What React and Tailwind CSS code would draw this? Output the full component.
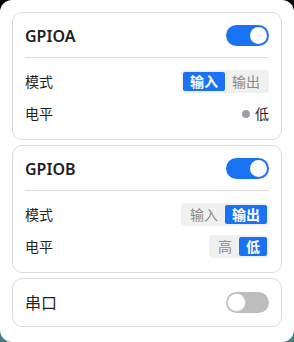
import { useState } from "react";

const font = { fontFamily: '"Noto Sans", "Noto Sans CJK SC", sans-serif' };

function Toggle({ on, onClick }) {
    return (
        <button
            onClick={onClick}
            className={`relative w-[43px] h-[21px] rounded-full ${on ? "bg-[#1a73f5]" : "bg-[#bdbdbd]"}`}
        >
            <span
                className={`absolute top-[2px] w-[17px] h-[17px] rounded-full bg-white ${on ? "right-[2px]" : "left-[2px] shadow-[0_0_0_1px_#cfcfcf]"}`}
            />
        </button>
    );
}

function Segment({ options, value, onChange }) {
    return (
        <div className="flex bg-[#f0f0f0] rounded-[4px] p-[2px]">
            {options.map((o) => (
                <button
                    key={o}
                    onClick={() => onChange(o)}
                    className={`h-[19px] px-[7px] rounded-[2px] text-[14px] leading-[19px] ${
                        value === o ? "bg-[#1a73f5] text-white font-bold" : "text-[#8a8a8a]"
                    }`}
                >
                    {o}
                </button>
            ))}
        </div>
    );
}

function GpioCard({ name, mode, setMode, level, setLevel }) {
    const [on, setOn] = useState(true);
    return (
        <div className="border border-[#dcdcdc] rounded-[10px] px-[12px]">
            <div className="h-[45px] flex items-center justify-between border-b border-[#dcdcdc] pt-[1px]">
                <span className="text-[16px] font-semibold text-[#1f1f1f]">{name}</span>
                <Toggle on={on} onClick={() => setOn(!on)} />
            </div>
            <div className="flex flex-col gap-[9px] pt-[12px] pb-[14px]">
                <div className="h-[23px] flex items-center justify-between">
                    <span className="text-[14px] text-[#1f1f1f]">模式</span>
                    <Segment options={["输入", "输出"]} value={mode} onChange={setMode} />
                </div>
                <div className="h-[23px] flex items-center justify-between">
                    <span className="text-[14px] text-[#1f1f1f]">电平</span>
                    {mode === "输入" ? (
                        <div className="flex items-center gap-[5px]">
                            <span className="w-[8px] h-[8px] rounded-full bg-[#9ca0ab]" />
                            <span className="text-[14px] text-[#1f1f1f]">{level}</span>
                        </div>
                    ) : (
                        <Segment options={["高", "低"]} value={level} onChange={setLevel} />
                    )}
                </div>
            </div>
        </div>
    );
}

export default function App() {
    const [modeA, setModeA] = useState("输入");
    const [levelA, setLevelA] = useState("低");
    const [modeB, setModeB] = useState("输出");
    const [levelB, setLevelB] = useState("低");
    const [uart, setUart] = useState(false);

    return (
        <div className="w-[294px] h-[342px] bg-gradient-to-b from-black to-[#3f7f80]" style={font}>
            <div className="h-full bg-white rounded-[12px] px-[12px] pt-[12px] flex flex-col gap-[5px]">
                <GpioCard name="GPIOA" mode={modeA} setMode={setModeA} level={levelA} setLevel={setLevelA} />
                <GpioCard name="GPIOB" mode={modeB} setMode={setModeB} level={levelB} setLevel={setLevelB} />
                <div className="h-[49px] border border-[#dcdcdc] rounded-[10px] px-[12px] flex items-center justify-between">
                    <span className="text-[16px] text-[#1f1f1f]">串口</span>
                    <Toggle on={uart} onClick={() => setUart(!uart)} />
                </div>
            </div>
        </div>
    );
}
